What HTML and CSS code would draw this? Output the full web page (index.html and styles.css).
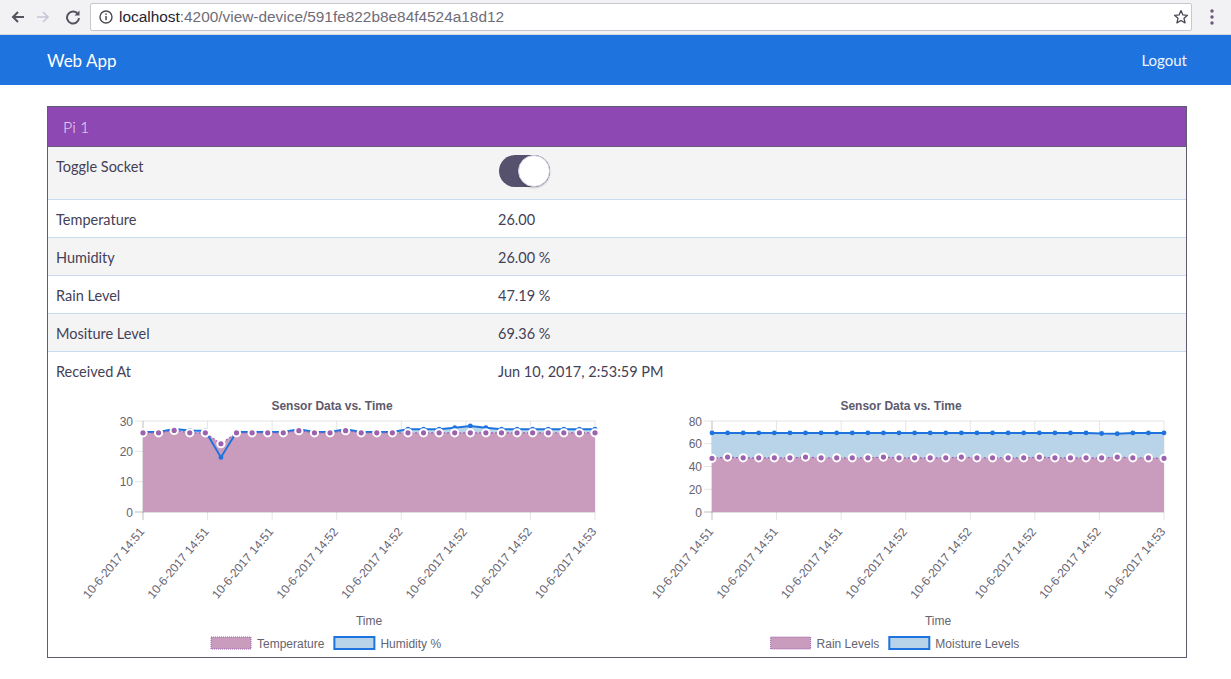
FILE: index.html
```html
<!DOCTYPE html>
<html lang="en">
<head>
<meta charset="utf-8">
<title>Web App</title>
<link rel="stylesheet" href="styles.css">
</head>
<body>
<div class="chrome">
  <div class="nav-btns">
    <svg class="btn back" width="16" height="16" viewBox="0 0 16 16"><path d="M14 8H3M8 3L3 8l5 5" fill="none" stroke="#55535e" stroke-width="2"/></svg>
    <svg class="btn fwd" width="16" height="16" viewBox="0 0 16 16"><path d="M2 8h11M8 3l5 5-5 5" fill="none" stroke="#c9c4d8" stroke-width="1.6"/></svg>
    <svg class="btn reload" width="16" height="16" viewBox="0 0 16 16"><path d="M13 5.2A6 6 0 1 0 14 9" fill="none" stroke="#55535e" stroke-width="2"/><path d="M14.5 1.5v5h-5z" fill="#55535e"/></svg>
  </div>
  <div class="omnibox">
    <svg class="info" width="14" height="14" viewBox="0 0 14 14"><circle cx="7" cy="7" r="6" fill="none" stroke="#4a4852" stroke-width="1.4"/><rect x="6.3" y="6" width="1.5" height="4.2" fill="#4a4852"/><rect x="6.3" y="3.4" width="1.5" height="1.5" fill="#4a4852"/></svg>
    <span class="url"><span class="host">localhost</span><span class="path">:4200/view-device/591fe822b8e84f4524a18d12</span></span>
    <svg class="star" width="16" height="16" viewBox="0 0 16 16"><path d="M8 1.6l1.9 4.3 4.6.4-3.5 3 1.1 4.6L8 11.5l-4.1 2.4 1.1-4.6-3.5-3 4.6-.4z" fill="none" stroke="#4a4852" stroke-width="1.3" stroke-linejoin="round"/></svg>
  </div>
  <div class="menu">
    <svg width="6" height="18" viewBox="0 0 6 18"><circle cx="3" cy="3" r="1.7" fill="#6d5a7a"/><circle cx="3" cy="9" r="1.7" fill="#6d5a7a"/><circle cx="3" cy="15" r="1.7" fill="#6d5a7a"/></svg>
  </div>
</div>

<nav class="navbar">
  <div class="container nav-inner">
    <span class="brand">Web App</span>
    <a class="logout" href="#">Logout</a>
  </div>
</nav>

<main class="container">
  <section class="card">
    <header class="card-header">Pi 1</header>
    <div class="table">
      <div class="row striped toggle-row">
        <div class="cell label">Toggle Socket</div>
        <div class="cell"><span class="switch"><span class="knob"></span></span></div>
      </div>
      <div class="row">
        <div class="cell label">Temperature</div>
        <div class="cell">26.00</div>
      </div>
      <div class="row striped">
        <div class="cell label">Humidity</div>
        <div class="cell">26.00 %</div>
      </div>
      <div class="row">
        <div class="cell label">Rain Level</div>
        <div class="cell">47.19 %</div>
      </div>
      <div class="row striped">
        <div class="cell label">Mositure Level</div>
        <div class="cell">69.36 %</div>
      </div>
      <div class="row last">
        <div class="cell label">Received At</div>
        <div class="cell">Jun 10, 2017, 2:53:59 PM</div>
      </div>
    </div>
    <div class="charts">
      <div class="chart" id="chart-temp"></div>
      <div class="chart" id="chart-rain"></div>
    </div>
  </section>
</main>
<script src="script.js"></script>
</body>
</html>
```

FILE: styles.css
```css
* { box-sizing: border-box; }
body {
  margin: 0;
  background: #fff;
  font-family: Lato, "Open Sans", sans-serif;
  color: #48455a;
}
.chrome {
  height: 35px;
  background: #f2f1f4;
  border-bottom: 1px solid #d9d6de;
  display: flex;
  align-items: center;
}
.nav-btns {
  display: flex;
  align-items: center;
  width: 90px;
  padding-left: 10px;
}
.nav-btns .fwd { margin-left: 9px; }
.nav-btns .reload { margin-left: 14px; }
.omnibox {
  width: 1102px;
  height: 28px;
  background: #fff;
  border: 1px solid #c9c6cf;
  border-radius: 2px;
  display: flex;
  align-items: center;
  padding: 0 2px 0 8px;
}
.url {
  flex: 1;
  margin-left: 6px;
  font-family: "Liberation Sans", Arial, sans-serif;
  font-size: 15.4px;
  color: #6f6c78;
  white-space: nowrap;
}
.host { color: #26232e; }
.menu {
  flex: 1;
  display: flex;
  justify-content: center;
  align-items: center;
}
.navbar {
  height: 50px;
  background: #1e73de;
}
.container {
  width: 1140px;
  margin-left: 47px;
}
.nav-inner {
  height: 50px;
  display: flex;
  align-items: center;
  justify-content: space-between;
}
.brand {
  color: #fff;
  font-size: 17px;
}
.logout {
  color: #f1f3ff;
  font-size: 15px;
  text-decoration: none;
}
.card {
  margin-top: 21px;
  border: 1px solid #5f5c70;
}
.card-header {
  background: #8e48b3;
  color: #f0e2f4;
  font-size: 16px;
  font-weight: 300;
  line-height: 19px;
  padding: 10px 15px;
  border-bottom: 1px solid #6b5a80;
}
.row {
  display: grid;
  grid-template-columns: 442px 1fr;
  border-bottom: 1px solid #c8dbef;
  font-size: 14.5px;
  line-height: 21px;
  color: #444157;
}
.row.striped { background: #f4f4f5; }
.row.last { border-bottom: none; }
.cell { padding: 9px 8px 7px; }
.toggle-row .cell { padding: 8px 8px 12px; }
.toggle-row .label { padding-top: 9px; }
.switch {
  display: flex;
  justify-content: flex-end;
  width: 51px;
  height: 32px;
  margin-left: 1px;
  border-radius: 16px;
  background: #56516d;
}
.knob {
  width: 32px;
  height: 32px;
  border-radius: 50%;
  background: #fff;
  border: 1px solid #d6cce6;
  box-shadow: 0 1px 2px rgba(0, 0, 0, 0.2);
}
.charts {
  display: flex;
}
.chart {
  width: 569px;
  height: 268px;
}
.chart svg { display: block; }
.chart text {
  font-family: "Liberation Sans", Arial, sans-serif;
  font-size: 12px;
  fill: #666370;
}
.chart .title { font-weight: bold; fill: #5e5a6c; }
```

FILE: script.js
```js
(function () {
  var NS = 'http://www.w3.org/2000/svg';
  function el(tag, attrs, parent, text) {
    var e = document.createElementNS(NS, tag);
    for (var k in attrs) e.setAttribute(k, attrs[k]);
    if (text !== undefined) e.textContent = text;
    if (parent) parent.appendChild(e);
    return e;
  }

  var PINK = '#c99cbd', PINK_LINE = '#9d62ad', BLUE_FILL = '#b9d4e9', BLUE = '#1e73de';
  var LABELS = ['10-6-2017 14:51', '10-6-2017 14:51', '10-6-2017 14:51', '10-6-2017 14:52',
    '10-6-2017 14:52', '10-6-2017 14:52', '10-6-2017 14:52', '10-6-2017 14:53'];

  function drawChart(id, cfg) {
    var W = 569, H = 268, L = 95, R = 547, T = 32, B = 123;
    var host = document.getElementById(id);
    var svg = el('svg', { width: W, height: H, viewBox: '0 0 ' + W + ' ' + H }, host);
    el('text', { x: 284, y: 21, 'text-anchor': 'middle', 'class': 'title' }, svg, 'Sensor Data vs. Time');

    function yOf(v) { return B - v / cfg.max * (B - T); }
    for (var v = 0; v <= cfg.max; v += cfg.step) {
      var y = yOf(v);
      el('line', { x1: L - 8, x2: R, y1: y, y2: y, stroke: v === 0 ? 'rgba(0,0,0,0.25)' : 'rgba(0,0,0,0.1)', 'stroke-width': 1 }, svg);
      el('text', { x: L - 10, y: y + 4.5, 'text-anchor': 'end' }, svg, String(v));
    }
    for (var i = 0; i < 8; i++) {
      var x = L + i * (R - L) / 7;
      el('line', { x1: x, x2: x, y1: T, y2: B + 8, stroke: i === 0 ? 'rgba(0,0,0,0.25)' : 'rgba(0,0,0,0.1)', 'stroke-width': 1 }, svg);
      var ly = B + 20;
      el('text', { x: x + 2, y: ly, 'text-anchor': 'end', transform: 'rotate(-50 ' + (x + 2) + ' ' + ly + ')' }, svg, LABELS[i]);
    }

    var n = cfg.sets[0].data.length;
    function xOf(i) { return L + i * (R - L) / (n - 1); }
    for (var s = cfg.sets.length - 1; s >= 0; s--) {
      var ds = cfg.sets[s];
      var pts = ds.data.map(function (d, i) { return xOf(i).toFixed(1) + ',' + yOf(d).toFixed(1); });
      el('path', { d: 'M' + L + ',' + B + ' L' + pts.join(' L') + ' L' + R + ',' + B + ' Z', fill: ds.fill }, svg);
    }
    for (s = cfg.sets.length - 1; s >= 0; s--) {
      ds = cfg.sets[s];
      pts = ds.data.map(function (d, i) { return xOf(i).toFixed(1) + ',' + yOf(d).toFixed(1); });
      el('polyline', { points: pts.join(' '), fill: 'none', stroke: ds.line, 'stroke-width': ds.lw, 'stroke-dasharray': ds.dash || 'none' }, svg);
      ds.data.forEach(function (d, i) {
        if (ds.ring) {
          el('circle', { cx: xOf(i), cy: yOf(d), r: 3.6, fill: ds.line, stroke: '#fff', 'stroke-width': 2 }, svg);
        } else {
          el('circle', { cx: xOf(i), cy: yOf(d), r: 2.4, fill: ds.line }, svg);
        }
      });
    }

    el('text', { x: (L + R) / 2, y: 236, 'text-anchor': 'middle' }, svg, 'Time');

    var g = el('g', {}, svg);
    var cx = 0;
    cfg.sets.forEach(function (ds) {
      el('rect', { x: cx, y: 248, width: 40, height: 12, fill: ds.fill, stroke: ds.line, 'stroke-width': ds.ring ? 1 : 2, 'stroke-dasharray': ds.ring ? '1 1' : 'none' }, g);
      var t = el('text', { x: cx + 46, y: 258.5 }, g, ds.label);
      cx += 46 + t.getComputedTextLength() + 10;
    });
    var total = cx - 10;
    g.setAttribute('transform', 'translate(' + (278 - total / 2).toFixed(1) + ',0)');
  }

  var temp = [], hum = [], rain = [], moist = [];
  for (var i = 0; i < 30; i++) {
    temp.push(26.1);
    hum.push(i < 17 ? 26.4 : 27.3);
    rain.push(i % 5 === 1 ? 48.3 : 47.6);
    moist.push(69.5);
  }
  temp[5] = 22.5; hum[5] = 18; hum[4] = 26.8;
  temp[2] = 26.9; hum[2] = 27.4; hum[3] = 26.9;
  hum[10] = 27.3; temp[10] = 26.8; hum[13] = 27.3; temp[13] = 26.8;
  hum[20] = 27.8; hum[21] = 28.4; hum[22] = 27.8;
  moist[25] = 69.0; moist[26] = 68.8;
  rain[0] = 47.2; rain[29] = 47.2;

  drawChart('chart-temp', {
    max: 30, step: 10,
    sets: [
      { label: 'Temperature', data: temp, fill: PINK, line: PINK_LINE, lw: 1.2, dash: '2 2', ring: true },
      { label: 'Humidity %', data: hum, fill: BLUE_FILL, line: BLUE, lw: 2 }
    ]
  });
  drawChart('chart-rain', {
    max: 80, step: 20,
    sets: [
      { label: 'Rain Levels', data: rain, fill: PINK, line: PINK_LINE, lw: 1.2, dash: '2 2', ring: true },
      { label: 'Moisture Levels', data: moist, fill: BLUE_FILL, line: BLUE, lw: 2 }
    ]
  });
})();
```
